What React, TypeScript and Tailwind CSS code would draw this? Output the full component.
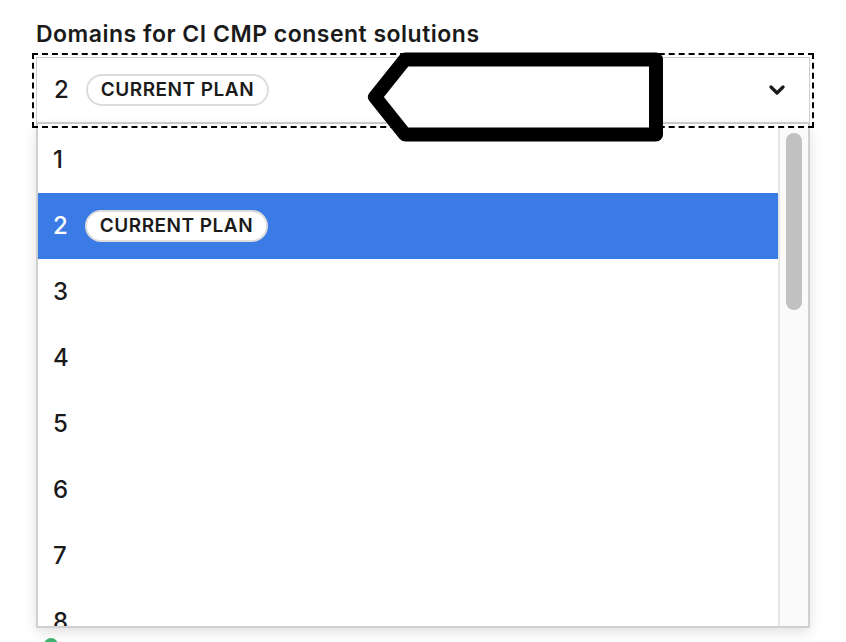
import React from "react";

const rows = [1, 2, 3, 4, 5, 6, 7, 8];

function Badge() {
  return (
    <span className="inline-flex h-[32px] items-center rounded-full border-2 border-[#dcdcdc] bg-white px-[13px] text-[19px] font-semibold tracking-[0.5px] text-[#1a1a1a]">
      CURRENT PLAN
    </span>
  );
}

export default function App() {
  return (
    <div
      className="relative h-[642px] w-[846px] overflow-hidden bg-white pl-[36px] pt-[20px] text-[#1a1a1a]"
      style={{ fontFamily: "Inter, 'Noto Sans', sans-serif" }}
    >
      <div className="text-[23px] font-semibold leading-[28px] tracking-[0.5px]">
        Domains for CI CMP consent solutions
      </div>
      <div className="mt-[9px] w-[774px] outline-2 outline-dashed outline-black outline-offset-[2px]">
        <div className="flex h-[67px] items-center border border-b-2 border-[#cfcfcf] bg-white pl-[17px] pr-[24px]">
          <span className="text-[24px] font-medium leading-none">2</span>
          <span className="ml-[17px]">
            <Badge />
          </span>
          <span className="flex-1" />
          <svg width="16" height="11" viewBox="0 0 16 11">
            <polyline
              points="2,2 8,8 14,2"
              fill="none"
              stroke="#1a1a1a"
              strokeWidth="3.2"
              strokeLinecap="round"
              strokeLinejoin="round"
            />
          </svg>
        </div>
      </div>
      <div className="flex h-[504px] w-[774px] overflow-hidden border-x-2 border-b-2 border-[#d0d0d0] bg-white pt-[3px] shadow-[0_4px_12px_rgba(0,0,0,0.12)]">
        <div className="flex-1">
          {rows.map((n) => (
            <div
              key={n}
              className={
                n === 2
                  ? "flex h-[66px] items-center bg-[#3a7be6] pl-[15px] text-white"
                  : "flex h-[66px] items-center pl-[15px]"
              }
            >
              <span className="text-[24px] font-medium leading-none">{n}</span>
              {n === 2 && (
                <span className="ml-[17px]">
                  <Badge />
                </span>
              )}
            </div>
          ))}
        </div>
        <div className="w-[30px] border-l-2 border-[#e6e6e6] bg-[#fafafa] pl-[6px] pt-[6px]">
          <div className="h-[177px] w-[16px] rounded-full bg-[#c1c1c1]" />
        </div>
      </div>
      <svg
        className="absolute left-[360px] top-[45px]"
        width="310"
        height="105"
        viewBox="0 0 310 105"
      >
        <path
          d="M15 52 L45 14.5 L296 14.5 L296 89.5 L45 89.5 Z"
          fill="white"
          stroke="black"
          strokeWidth="14"
          strokeLinejoin="round"
        />
      </svg>
      <div className="absolute left-[44px] top-[638px] h-[14px] w-[14px] rounded-full bg-[#3fb36b]" />
    </div>
  );
}
